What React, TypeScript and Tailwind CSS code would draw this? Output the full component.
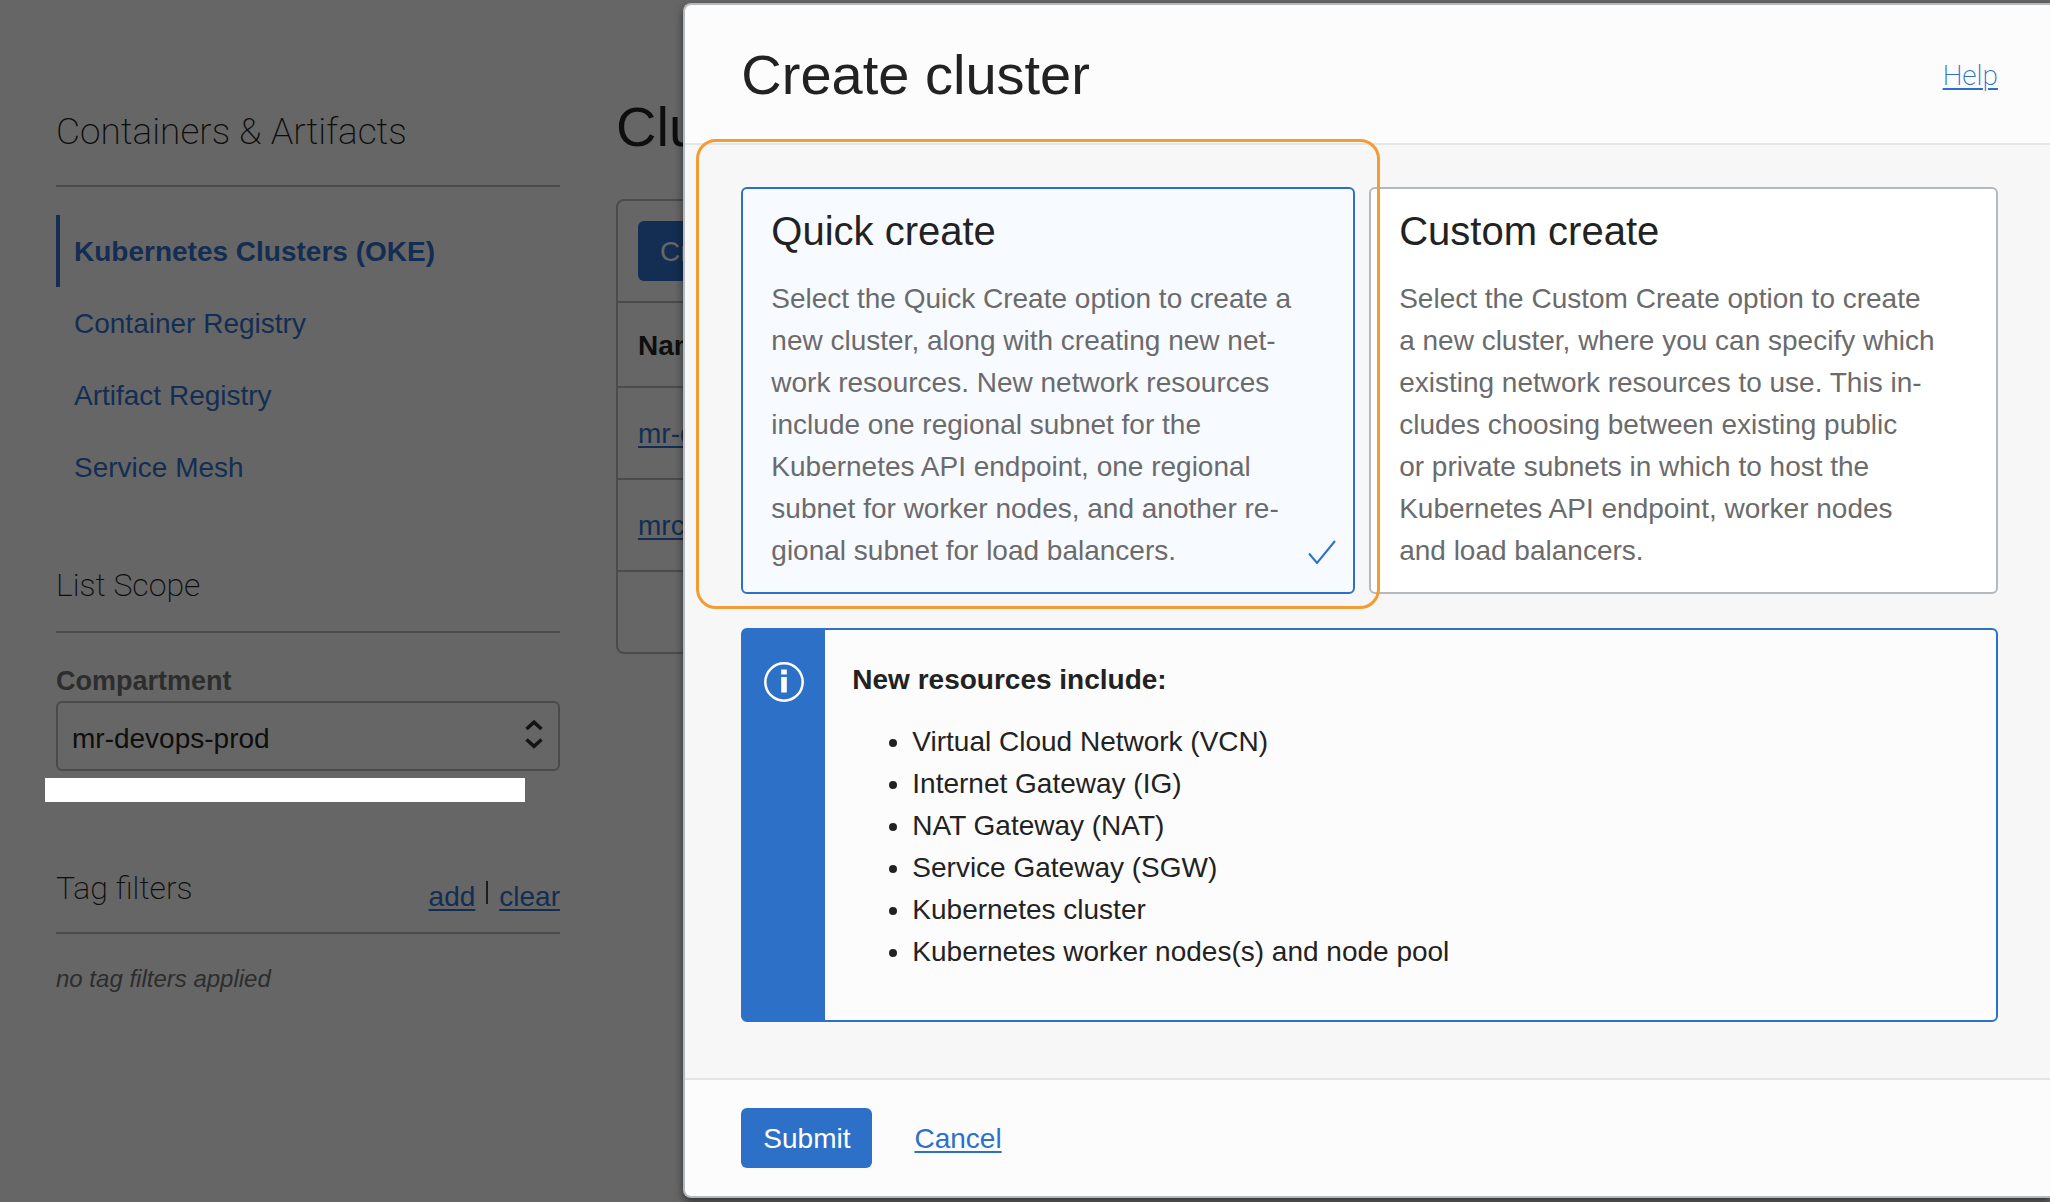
import { useState } from "react";

const navItems = ["Kubernetes Clusters (OKE)", "Container Registry", "Artifact Registry", "Service Mesh"];

const resources = [
  "Virtual Cloud Network (VCN)",
  "Internet Gateway (IG)",
  "NAT Gateway (NAT)",
  "Service Gateway (SGW)",
  "Kubernetes cluster",
  "Kubernetes worker nodes(s) and node pool",
];

const options = [
  {
    id: "quick",
    title: "Quick create",
    text: "Select the Quick Create option to create a new cluster, along with creating new net\u00ADwork resources. New network resources include one regional subnet for the Kubernetes API endpoint, one regional subnet for worker nodes, and another re\u00ADgional subnet for load balancers.",
  },
  {
    id: "custom",
    title: "Custom create",
    text: "Select the Custom Create option to create a new cluster, where you can specify which existing network resources to use. This in\u00ADcludes choosing between existing public or\u00A0private subnets in which to host the Kubernetes API endpoint, worker nodes and load balancers.",
  },
];

function Sidebar() {
  return (
    <aside className="w-[504px] shrink-0 pt-[108px]">
      <h2 className="border-b-2 border-[#4b4b4b] pb-[29px] font-['Roboto'] text-[37px] leading-[48px] font-extralight text-[#0c0c0c]">
        Containers &amp; Artifacts
      </h2>
      <nav className="mt-7 flex flex-col">
        {navItems.map((item, i) => (
          <a
            key={item}
            href="#"
            className={
              i === 0
                ? "border-l-4 border-[#132e52] pt-4 pb-[14px] pl-[14px] font-bold text-[#132e52]"
                : "border-l-4 border-transparent pt-4 pb-[14px] pl-[14px] text-[#132e52]"
            }
          >
            {item}
          </a>
        ))}
      </nav>

      <h3 className="mt-[62px] border-b-2 border-[#4b4b4b] pb-[26px] font-['Roboto'] text-[32px] leading-[40px] font-extralight text-[#0c0c0c]">
        List Scope
      </h3>
      <label htmlFor="compartment" className="mt-7 block text-[27px] leading-[40px] font-bold text-[#2d2d2d]">
        Compartment
      </label>
      <div className="relative">
        <select
          id="compartment"
          className="block h-[70px] w-full appearance-none rounded-md border-2 border-[#4b4b4b] bg-transparent pt-[6px] pl-[14px] text-[#0e0e0e]"
        >
          <option>mr-devops-prod</option>
        </select>
        <svg
          className="pointer-events-none absolute top-[18px] right-[17px] h-[30px] w-[18px]"
          viewBox="0 0 18 30"
          fill="none"
          stroke="#141414"
          strokeWidth="3.5"
        >
          <path d="M1.500 10 9 3.200 16.500 10M1.500 20.500 9 27.300 16.500 20.500" />
        </svg>
      </div>
      <div className="mt-[7px] -ml-[11px] h-6 w-[480px] bg-white" />

      <div className="mt-[66px] flex items-end justify-between border-b-2 border-[#4b4b4b] pb-[14px]">
        <h3 className="pb-[10px] font-['Roboto'] text-[32px] leading-[40px] font-extralight text-[#0c0c0c]">
          Tag filters
        </h3>
        <div className="flex">
          <a href="#" className="text-[#132e52] underline decoration-2 underline-offset-3">
            add
          </a>
          <span className="mx-[11px] mt-[5px] h-[23px] w-[2px] bg-[#1c1c1c]" />
          <a href="#" className="text-[#132e52] underline decoration-2 underline-offset-3">
            clear
          </a>
        </div>
      </div>
      <p className="mt-[27px] text-[24px] leading-[36px] text-[#2d2d2d] italic">no tag filters applied</p>
    </aside>
  );
}

function ClusterList() {
  return (
    <main className="ml-14 min-w-0 flex-1 overflow-hidden pt-[95px]">
      <h1 className="text-[56px] leading-[64px] whitespace-nowrap text-[#0e0e0e]">Clusters</h1>
      <div className="mt-10 w-max rounded-lg border-2 border-[#4b4b4b]">
        <div className="px-5 py-5">
          <button type="button" className="h-[60px] rounded-md bg-[#132e52] px-[22px] pt-[2px] text-[#666]">
            Create
          </button>
        </div>
        <table className="w-full text-left">
          <thead>
            <tr className="h-[85px] border-y-2 border-[#4b4b4b]">
              <th className="pt-[3px] pl-5 font-bold text-[#0e0e0e]">Name</th>
            </tr>
          </thead>
          <tbody>
            {["mr-devops", "mrcluster"].map((name) => (
              <tr key={name} className="h-[92px] border-b-2 border-[#4b4b4b]">
                <td className="pt-px pl-5">
                  <a href="#" className="text-[#132e52] underline decoration-2 underline-offset-3">
                    {name}
                  </a>
                </td>
              </tr>
            ))}
            <tr className="h-[81px]">
              <td />
            </tr>
          </tbody>
        </table>
      </div>
    </main>
  );
}

function CreateDialog() {
  const [selected, setSelected] = useState("quick");
  return (
    <section
      role="dialog"
      aria-label="Create cluster"
      className="absolute top-[3px] right-0 bottom-1 left-1/3 flex flex-col rounded-l-lg border-2 border-r-0 border-[#b4b9bd] bg-[#fcfcfc] text-[#222] shadow-[0_4px_8px_0_rgba(0,0,0,0.5)]"
    >
      <header className="flex items-center justify-between border-b-2 border-[#e5e5e5] pt-[38px] pr-[52px] pb-9 pl-14">
        <h2 className="text-[56px] leading-[64px]">Create cluster</h2>
        <a
          href="#"
          className="pt-[2px] font-['Roboto'] font-extralight text-[#2d70c8] underline decoration-2 underline-offset-3"
        >
          Help
        </a>
      </header>

      <div className="flex-1 bg-[#f7f7f7] pt-[42px] pr-[52px] pl-14">
        <div className="grid grid-cols-[614fr_629fr] gap-[14px]">
          {options.map((o) => {
            const on = selected === o.id;
            return (
              <div key={o.id} className="relative flex">
                <label
                  className={
                    on
                      ? "relative flex-1 cursor-pointer rounded-md border-2 border-[#2d70c8] bg-[#f7faff] pt-[18px] pr-8 pb-5 pl-7"
                      : "relative flex-1 cursor-pointer rounded-md border-2 border-[#b4b9bd] bg-white pt-[18px] pr-8 pb-5 pl-7"
                  }
                >
                  <input
                    type="radio"
                    name="mode"
                    className="sr-only"
                    checked={on}
                    onChange={() => setSelected(o.id)}
                  />
                  <span className="mb-[23px] block text-[40px] leading-[48px]">{o.title}</span>
                  <span className="block max-w-[539px] hyphens-manual text-[#6b6b6b]">{o.text}</span>
                  {on && (
                    <svg
                      className="absolute right-[17px] bottom-[28px] h-6 w-7"
                      viewBox="0 0 28 24"
                      fill="none"
                      stroke="#2d70c8"
                      strokeWidth="2"
                    >
                      <path d="M1 13.500 9 23 27 1" />
                    </svg>
                  )}
                </label>
                {o.id === "quick" && (
                  <div className="pointer-events-none absolute -top-12 -right-[25px] -bottom-[15px] -left-[45px] z-10 rounded-[20px] border-3 border-[#f49b33]" />
                )}
              </div>
            );
          })}
        </div>

        <div className="mt-[34px] flex rounded-md border-2 border-[#2d70c8] bg-[#fcfcfc]">
          <div className="flex w-[82px] shrink-0 justify-center bg-[#2d70c8] pt-8">
            <svg className="h-10 w-10" viewBox="0 0 40 40" fill="none">
              <circle cx="20" cy="20" r="18.700" stroke="white" strokeWidth="2.5" />
              <path d="M17.200 7.500h5.600v5h-5.600zM17.200 15h5.600v15.500h-5.600z" fill="white" />
            </svg>
          </div>
          <div className="pt-[29px] pb-[47px] pl-[27px]">
            <h3 className="font-bold">New resources include:</h3>
            <ul className="mt-5 list-disc pl-[60px]">
              {resources.map((r) => (
                <li key={r}>{r}</li>
              ))}
            </ul>
          </div>
        </div>
      </div>

      <footer className="flex items-center gap-[42px] rounded-bl-lg border-t-2 border-[#e5e5e5] py-7 pr-[52px] pl-14">
        <button type="button" className="h-[60px] rounded-md bg-[#2d70c8] px-[22px] pt-[2px] text-white">
          Submit
        </button>
        <a href="#" className="pt-[2px] text-[#2d70c8] underline decoration-2 underline-offset-3">
          Cancel
        </a>
      </footer>
    </section>
  );
}

export default function App() {
  return (
    <div className="relative flex min-h-screen overflow-hidden bg-[#666] pr-[66.6%] pl-14 font-['Liberation_Sans',Arial,sans-serif] text-[28px] leading-[42px]">
      <Sidebar />
      <ClusterList />
      <CreateDialog />
    </div>
  );
}
